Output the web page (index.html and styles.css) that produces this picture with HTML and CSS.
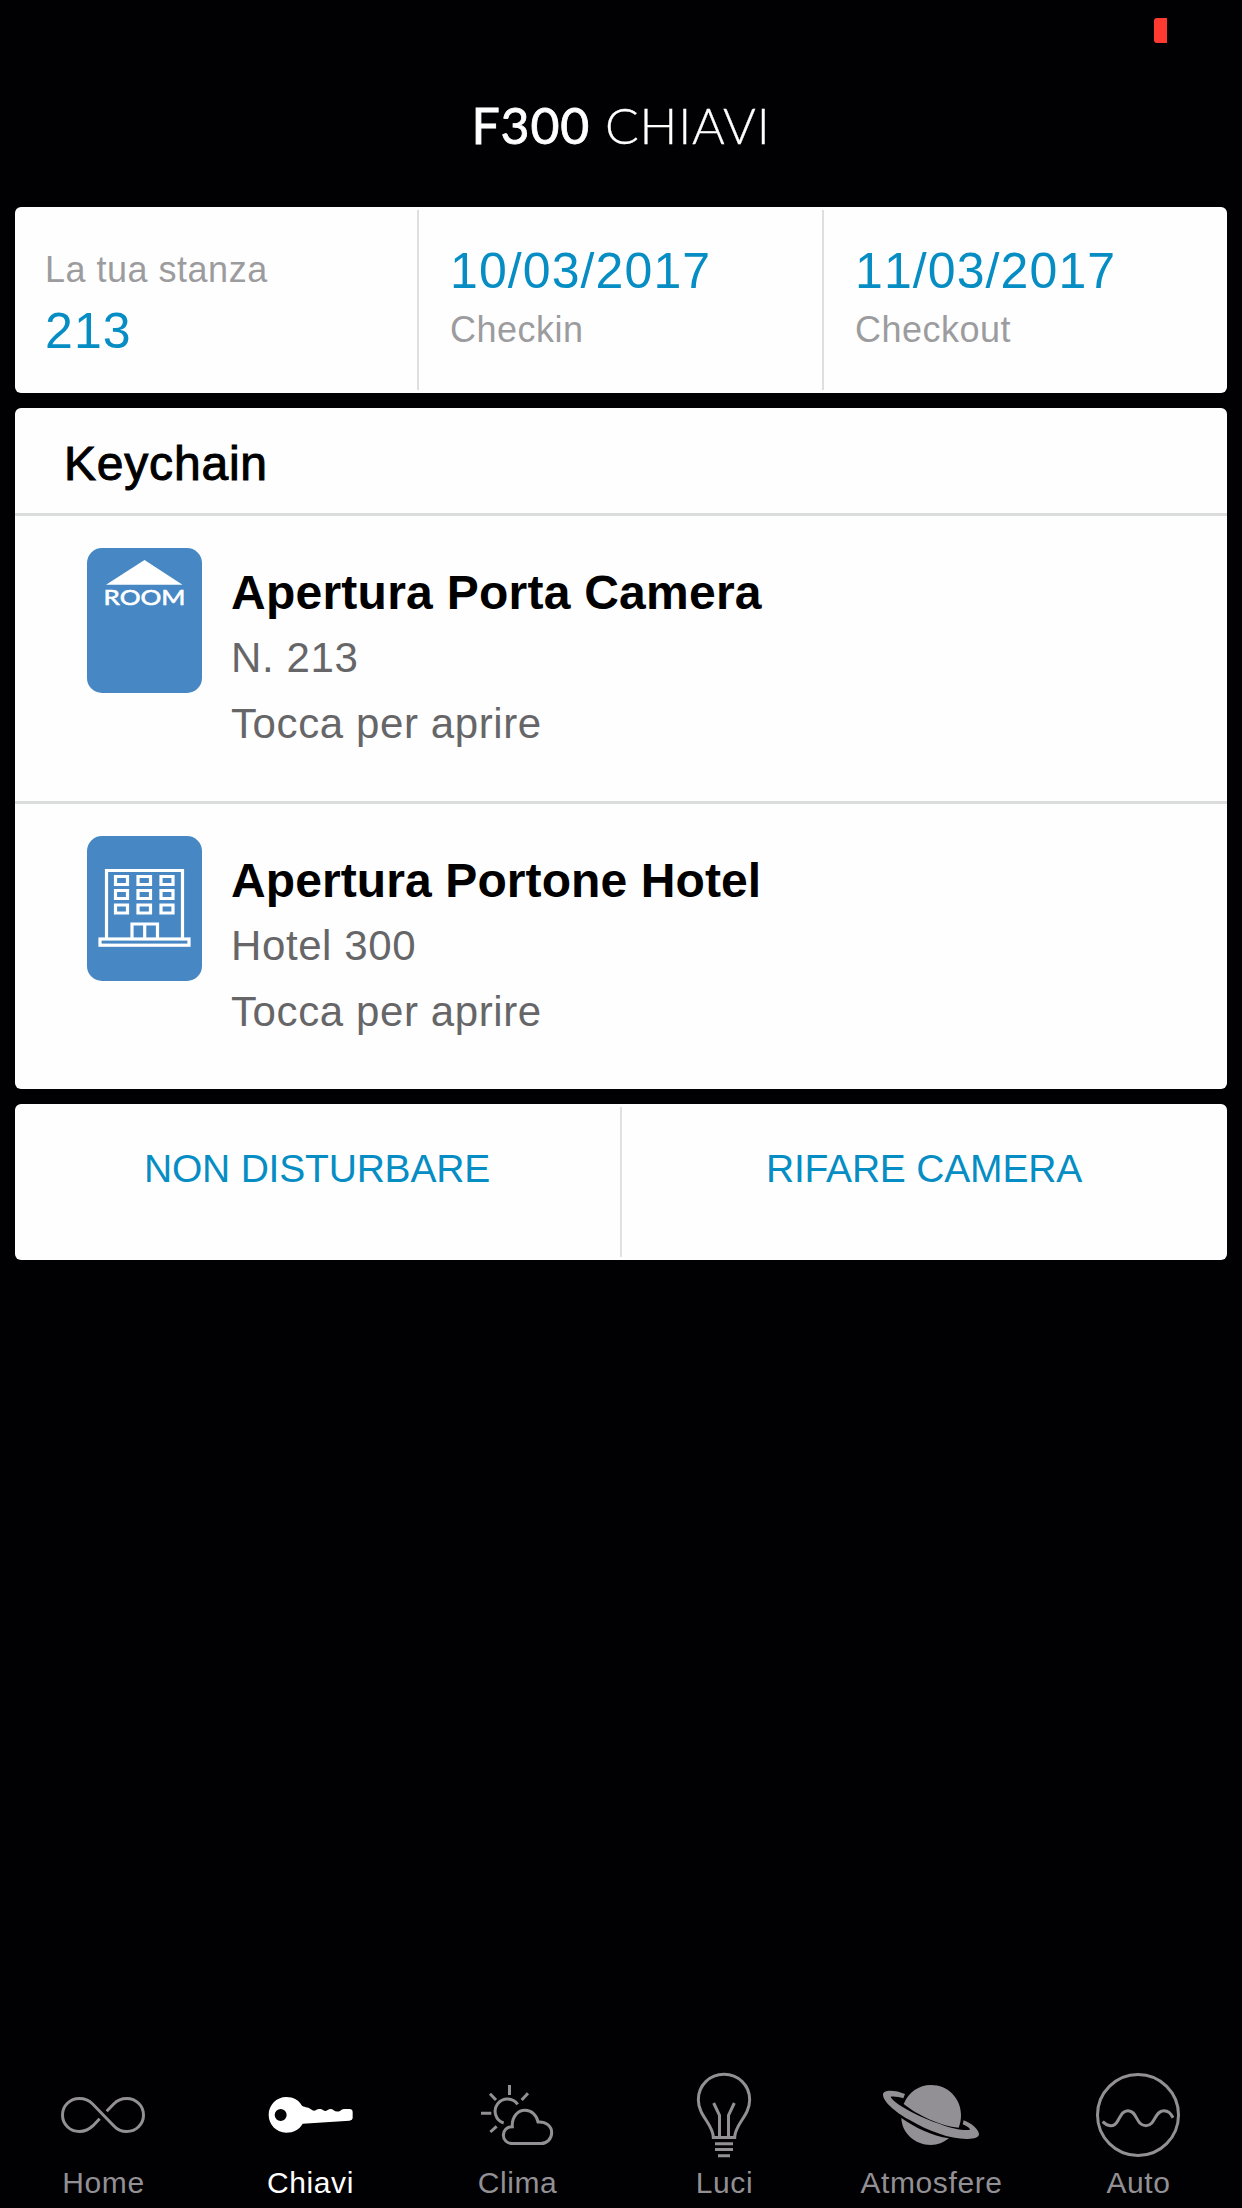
FILE: index.html
```html
<!DOCTYPE html>
<html lang="it">
<head>
<meta charset="utf-8">
<title>F300 Chiavi</title>
<link rel="stylesheet" href="styles.css">
</head>
<body>
<div class="app">
  <div class="status"><span class="battery"></span></div>
  <header class="title"><span class="brand">F300</span><span class="section">CHIAVI</span></header>

  <main class="content">
    <section class="card stay">
      <div class="cell"><div class="label">La tua stanza</div><div class="value">213</div></div>
      <div class="cell"><div class="value">10/03/2017</div><div class="label">Checkin</div></div>
      <div class="cell"><div class="value">11/03/2017</div><div class="label">Checkout</div></div>
    </section>

    <section class="card keychain">
      <h2 class="heading">Keychain</h2>
      <div class="key">
        <svg class="tile" viewBox="0 0 115 145">
          <rect width="115" height="145" rx="15" fill="#4687c4"/>
          <path d="M57.500 12L95.500 36.800H19Z" fill="#fff"/>
          <text class="tile-text" x="16.500" y="57.300" textLength="82" lengthAdjust="spacingAndGlyphs">ROOM</text>
        </svg>
        <div class="info">
          <div class="name">Apertura Porta Camera</div>
          <div class="detail">N. 213</div>
          <div class="detail">Tocca per aprire</div>
        </div>
      </div>
      <div class="key">
        <svg class="tile" viewBox="0 0 115 145">
          <rect width="115" height="145" rx="15" fill="#4687c4"/>
          <g fill="none" stroke="#fff" stroke-width="3.200">
            <path d="M19.500 102.500V34.500H95.500V102.500"/>
            <rect x="13" y="103" width="89" height="6.200"/>
            <path d="M45 102.500V88H70.500V102.500M57.700 88V102.500"/>
            <path d="M28.500 40.500h12v8h-12zM51 40.500h12.500v8H51zM74 40.500h12v8h-12zM28.500 54.500h12v8h-12zM51 54.500h12.500v8H51zM74 54.500h12v8h-12zM28.500 69h12v8h-12zM51 69h12.500v8H51zM74 69h12v8h-12z"/>
          </g>
        </svg>
        <div class="info">
          <div class="name hotel">Apertura Portone Hotel</div>
          <div class="detail">Hotel 300</div>
          <div class="detail">Tocca per aprire</div>
        </div>
      </div>
    </section>

    <section class="card actions">
      <div class="action">NON DISTURBARE</div>
      <div class="action">RIFARE CAMERA</div>
    </section>
  </main>

  <nav class="tabs">
    <div class="tab">
      <svg class="icon" viewBox="0 66 621 258">
        <path d="M299 206L279 227C266 240 254 244.500 238 244.500C210 244.500 187.500 223 187.500 195C187.500 167 210 145.500 238 145.500C254 145.500 267 151 278 162L341 227C352 239 364 244.500 380 244.500C408 244.500 430.500 223 430.500 195C430.500 167 408 145.500 380 145.500C364 145.500 352 151 341 162L320 184" class="line"/>
      </svg>
      <span>Home</span>
    </div>
    <div class="tab active">
      <svg class="icon" viewBox="621 66 621 258">
        <path fill="currentColor" fill-rule="evenodd" d="M859 141C880 141 897 151 906 167C917 173 926 171 935 179Q941 184 947 181C955 175 964 176 970 181Q976 186 983 180Q993 173 1001 181Q1009 187 1020 183C1027 175 1037 177 1048 177Q1058 177 1058 187V203Q1058 210 1048 212L908 221C898 239 880 248 859 248C829 248 806 224 806 195C806 165 829 141 859 141ZM842 177A18 18 0 1 0 842 213A18 18 0 1 0 842 177Z"/>
      </svg>
      <span>Chiavi</span>
    </div>
    <div class="tab">
      <svg class="icon" viewBox="-18 66 621 258">
        <path class="line" d="M268.500 105V135M210 131L228 150M324 130L305 150M183 190H214M211 246L230 229M293 163A37 37 0 1 0 251 219"/>
        <path class="line" d="M275 280.500H363C381 280.500 395 266 395 248C395 229 378 214 354 216C350 195 335 181 315 181C292 181 275 202 277 230C261 230 250 241 250 255C250 269 261 280.500 275 280.500Z"/>
      </svg>
      <span>Clima</span>
    </div>
    <div class="tab">
      <svg class="icon" viewBox="603 66 621 258">
        <path class="line" d="M880 262.500C880 222 835 198 835 149C835 106 869 73 912 73C955 73 989 106 989 149C989 198 944 222 944 262.500ZM881 159L898.500 196V262M943 159L925.500 196V262M885 281H939M885 298.500H939M894 317H930"/>
      </svg>
      <span>Luci</span>
    </div>
    <div class="tab">
      <svg class="icon" viewBox="-36 66 621 258">
        <path fill="currentColor" d="M191 162C206 127 236 105 273 105C324 105 363 145 363 195C363 208 361 221 356 233C303 229 232 195 191 162ZM184 204C224 232 276 258 327 265C311 278 293 285 273 285C224 285 185 248 184 204Z"/>
        <path fill="currentColor" d="M195 132C168 121 129 117 129 134C129 154 164 184 205 208C267 245 333 268 383 267C403 267 417 262 417 253C417 239 394 219 371 211L368 223C382 229 390 235 390 239C376 243 339 238 300 222C246 204 190 175 165 155Q153 145 152 140C161 138 176 140 190 145Z"/>
      </svg>
      <span>Atmosfere</span>
    </div>
    <div class="tab">
      <svg class="icon" viewBox="585 66 621 258">
        <circle class="line" cx="894" cy="195" r="121.500"/>
        <path class="line" d="M788 215C801 228 821 235 833 213C844 194 849 182 864 182C892 182 887 227 918 227C947 227 943 182 971 182C986 182 992 190 999 203"/>
      </svg>
      <span>Auto</span>
    </div>
  </nav>
</div>
</body>
</html>
```
FILE: styles.css
```css
* { box-sizing: border-box; }

body {
  margin: 0;
  background: #010002;
  font-family: "Liberation Sans", Arial, sans-serif;
}

.app {
  display: flex;
  flex-direction: column;
  height: 2208px;
}

.status {
  display: flex;
  justify-content: flex-end;
  height: 60px;
  padding: 18px 75px 0 0;
}

.battery {
  width: 13px;
  height: 25px;
  border-radius: 3px 0 0 3px;
  background: #ff3a31;
}

.title {
  display: flex;
  justify-content: center;
  gap: 15px;
  height: 147px;
  padding-top: 25px;
  color: #fff;
  font: 400 50px/80px Lato, sans-serif;
  letter-spacing: 0.8px;
}

.brand { -webkit-text-stroke: 0.8px #fff; }

.section {
  font-weight: 300;
  -webkit-text-stroke: 0.3px #fff;
}

.content {
  display: flex;
  flex-direction: column;
  gap: 15px;
  padding: 0 15px;
}

.card {
  border-radius: 6px;
  background: #fefefe;
}

.stay {
  display: grid;
  grid-template-columns: 404px 405px 1fr;
  height: 186px;
  padding: 3px 0;
}

.cell {
  padding: 30px 0 0 31px;
  border-right: 2px solid #dee0e0;
  line-height: 60px;
}

.cell:first-child { padding-left: 30px; }

.cell:last-child { border-right: 0; }

.label {
  color: #9c9c9e;
  font-size: 36px;
  letter-spacing: 0.5px;
}

.value {
  height: 60px;
  padding-top: 1px;
  color: #058dc4;
  font-size: 50px;
  font-kerning: none;
  letter-spacing: 1.1px;
}

.keychain { height: 681px; }

.heading {
  height: 105px;
  margin: 0;
  padding: 6px 0 0 49px;
  color: #000;
  font-size: 48px;
  font-weight: 400;
  line-height: 99px;
  letter-spacing: 0.8px;
  -webkit-text-stroke: 1px #000;
}

.key {
  display: flex;
  gap: 29px;
  height: 288px;
  padding: 32px 0 0 72px;
  border-top: 3px solid #dbdddc;
}

.tile {
  flex: none;
  width: 115px;
  height: 145px;
}

.tile-text {
  fill: #fff;
  stroke: #fff;
  stroke-width: 0.6px;
  font: 400 21.5px Lato, sans-serif;
}

.info { padding-top: 12px; }

.name {
  color: #000;
  font-size: 48px;
  font-weight: 700;
  line-height: 65px;
  letter-spacing: 0.25px;
}

.hotel { letter-spacing: 0.1px; }

.detail {
  color: #666668;
  font-size: 42px;
  line-height: 66px;
  letter-spacing: 0.6px;
}

.actions {
  display: grid;
  grid-template-columns: 607px 1fr;
  height: 156px;
  padding: 3px 0;
}

.action {
  padding-right: 1px;
  color: #058dc4;
  font-size: 39px;
  line-height: 123px;
  letter-spacing: -0.2px;
  text-align: center;
}

.action:first-child { border-right: 2px solid #dee2e4; }

.tabs {
  display: grid;
  grid-template-columns: repeat(6, 207px);
  margin-top: auto;
}

.tab {
  display: flex;
  flex-direction: column;
  align-items: center;
  color: #929094;
  font-size: 30px;
  line-height: 50px;
  letter-spacing: 0.6px;
}

.active { color: #fff; }

.icon {
  width: 207px;
  height: 86px;
}

.line {
  fill: none;
  stroke: currentColor;
  stroke-width: 9;
}
```
